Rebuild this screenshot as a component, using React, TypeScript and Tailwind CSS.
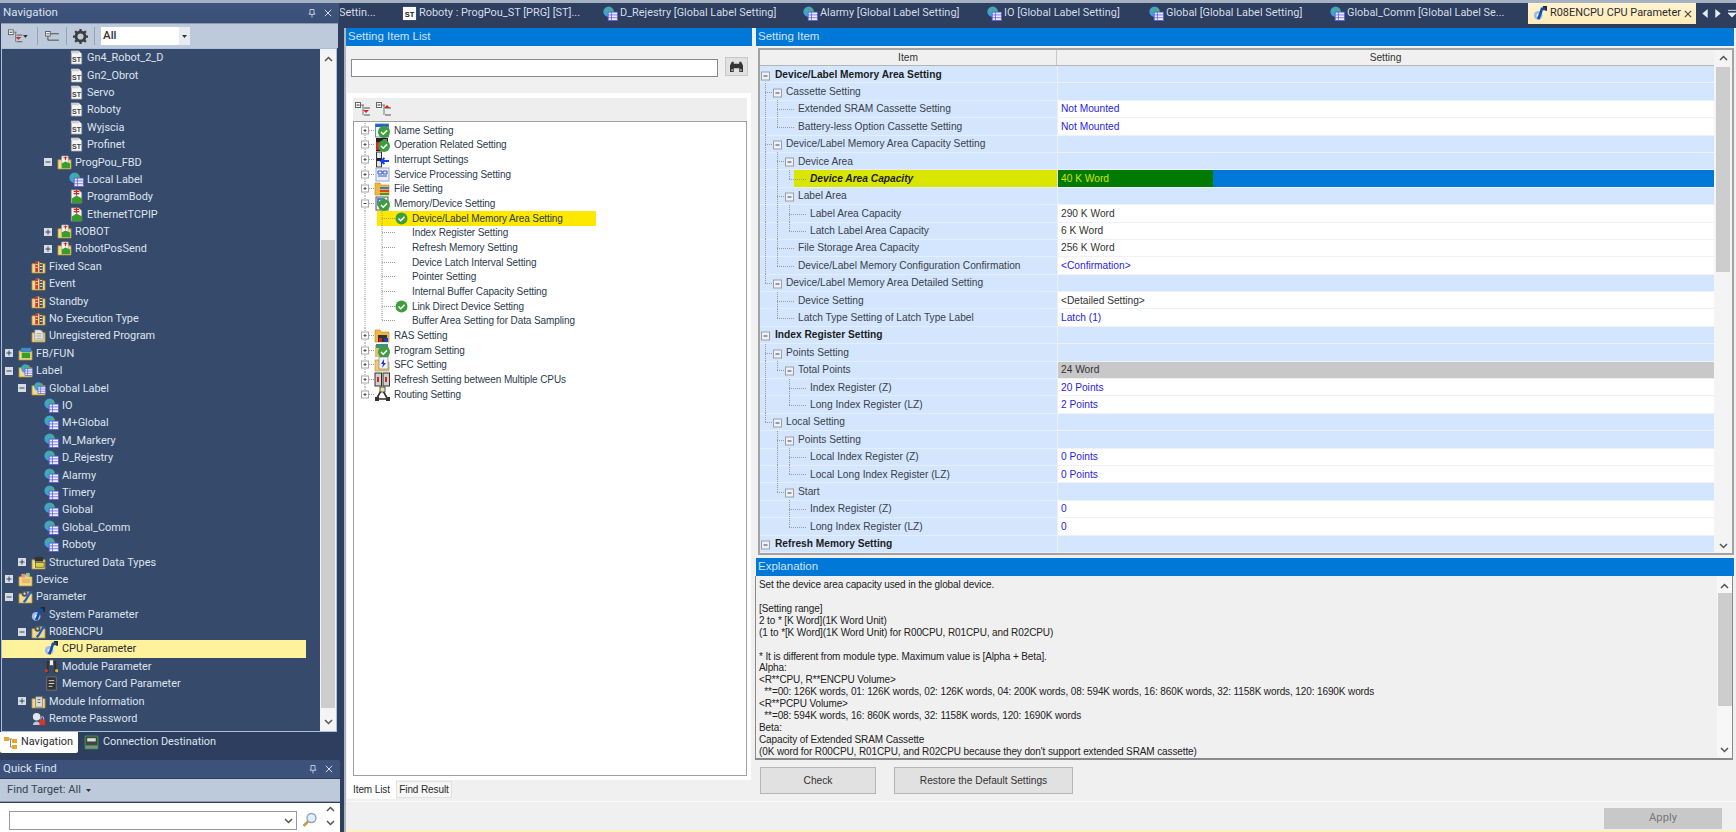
import React from "react";

const SEG = "font-['Roboto',sans-serif]";
const ARL = "font-['Liberation_Sans',sans-serif]";

type IconName = "st" | "globe" | "globeFolder" | "fbd" | "fbdFolder" | "scan" | "unreg" | "fb" | "struct" | "device" | "paramFolder" | "param" | "module" | "card" | "info" | "pass";

function Folder() {
  return <path d="M1 5h4l1-2h6v2h3v10H1z" fill="#f3d98a" stroke="#a5873a" strokeWidth="0.8" />;
}
function GlobeTable() {
  return (
    <>
      <circle cx="6" cy="6" r="5.6" fill="#3f9ee6" />
      <path d="M3 2.5c2 0 3 1 2.5 2.5S3 6 2.5 8M7 1c1 1.5 3 1 3.5 3S8 5.5 8 7" fill="#4cb85a" />
      <rect x="5.5" y="6.5" width="10" height="9" fill="#eeeeff" stroke="#5a5ad8" strokeWidth="0.9" />
      <path d="M5.5 9.5h10M5.5 12.5h10M9 6.5v9" stroke="#5a5ad8" strokeWidth="0.8" />
    </>
  );
}
function GearWrench() {
  return (
    <>
      <circle cx="5.5" cy="10" r="4.6" fill="#9dbcf0" />
      <circle cx="5.5" cy="10" r="1.7" fill="#eef3fd" />
      <path d="M14 3L9.5 3 8 8 5.5 14" stroke="#164fa8" strokeWidth="2.8" fill="none" />
      <path d="M10.5 1h3.5v4" stroke="#22262e" strokeWidth="1.8" fill="none" />
    </>
  );
}
function NavIcon({ n }: { n: IconName }) {
  return (
    <svg viewBox="0 0 16 16" className="w-[15px] h-[15px] shrink-0">
      {n === "st" && (
        <>
          <path d="M2.5 1h8l3 3v11h-11z" fill="#f5f5f5" stroke="#a8a8a8" strokeWidth="0.8" />
          <rect x="2.5" y="1" width="8" height="2.5" fill="#cfcfcf" />
          <text x="8" y="13" textAnchor="middle" fontSize="7.5" fontWeight="700" fill="#444" fontFamily="Liberation Sans, sans-serif">ST</text>
        </>
      )}
      {n === "globe" && <GlobeTable />}
      {n === "globeFolder" && (
        <>
          <Folder />
          <g transform="translate(3 1) scale(0.8)"><GlobeTable /></g>
        </>
      )}
      {n === "fbd" && (
        <>
          <path d="M2.5 1h8l3 3v11h-11z" fill="#f2f2f2" stroke="#a0a0a0" strokeWidth="0.7" />
          <path d="M5 2.5h6M8 1v6M5 5h6" stroke="#d8261c" strokeWidth="1.3" />
          <path d="M3 10l5-3 6 3v5H3z" fill="#3a9d2b" />
        </>
      )}
      {n === "fbdFolder" && (
        <>
          <Folder />
          <path d="M5 1h7v10H5z" fill="#f4f4f4" stroke="#999" strokeWidth="0.6" />
          <path d="M7 3h4M9 1.5v4" stroke="#d8261c" strokeWidth="1.1" />
          <path d="M5 9l4-2 5 2v5H5z" fill="#3a9d2b" />
        </>
      )}
      {n === "scan" && (
        <>
          <Folder />
          <rect x="4.5" y="3" width="3" height="11" fill="#d8352a" />
          <rect x="9" y="1" width="3.5" height="13" fill="#4a4a4a" />
          <path d="M5 6h2M5 9h2M9.5 5h2.5M9.5 8h2.5M9.5 11h2.5" stroke="#eee" strokeWidth="1" />
        </>
      )}
      {n === "unreg" && (
        <>
          <Folder />
          <path d="M4 2h6l3 3v8H4z" fill="#e6e6e6" stroke="#8a8a8a" strokeWidth="0.7" />
          <path d="M6 6h5M6 8.5h5M6 11h5" stroke="#999" strokeWidth="0.9" />
        </>
      )}
      {n === "fb" && (
        <>
          <Folder />
          <rect x="3" y="2" width="11" height="4" fill="#3e8ed0" stroke="#2a5f9a" strokeWidth="0.6" />
          <rect x="4" y="7" width="9" height="6" fill="#3a9d2b" />
        </>
      )}
      {n === "struct" && (
        <>
          <Folder />
          <rect x="4" y="2" width="9" height="5" fill="#333" />
          <rect x="5" y="8" width="9" height="5" fill="#d9d23a" stroke="#333" strokeWidth="0.6" />
        </>
      )}
      {n === "device" && (
        <>
          <Folder />
          <rect x="3.5" y="2" width="4" height="4" fill="#e88e8e" />
          <rect x="8.5" y="1" width="4" height="4" fill="#9ac48a" />
          <rect x="4" y="7" width="9" height="5" fill="#e9b66a" />
        </>
      )}
      {n === "paramFolder" && (
        <>
          <Folder />
          <circle cx="7" cy="5" r="3.2" fill="#555" />
          <path d="M14 2L8 12 6 14" stroke="#1f5fc4" strokeWidth="2.4" fill="none" />
          <circle cx="7" cy="5" r="1.2" fill="#ddd" />
        </>
      )}
      {n === "param" && <GearWrench />}
      {n === "module" && (
        <>
          <path d="M4 15V3h8v12" stroke="#3a2d20" strokeWidth="2" fill="none" />
          <rect x="6" y="1" width="4" height="6" fill="#eee" stroke="#444" strokeWidth="0.7" />
          <rect x="1" y="11" width="3" height="3" fill="#d8352a" />
          <rect x="12" y="11" width="3" height="3" fill="#e3b53a" />
        </>
      )}
      {n === "card" && (
        <>
          <rect x="3" y="1" width="10" height="14" fill="#333" stroke="#888" strokeWidth="0.7" />
          <path d="M5 5h6M5 8h6M5 11h4" stroke="#ddd" strokeWidth="1" />
        </>
      )}
      {n === "info" && (
        <>
          <Folder />
          <rect x="5" y="3" width="7" height="11" fill="#ddd" stroke="#666" strokeWidth="0.7" />
          <path d="M7 6h3M7 9h3" stroke="#555" strokeWidth="1" />
        </>
      )}
      {n === "pass" && (
        <>
          <circle cx="6" cy="6" r="4" fill="#dfe6ee" />
          <path d="M2 15c0-5 8-5 8 0z" fill="#bfc8d2" />
          <rect x="9" y="9" width="6" height="6" fill="#d8352a" />
          <path d="M10.5 9V7.5a1.5 1.5 0 013 0V9" stroke="#ccc" fill="none" />
        </>
      )}
    </svg>
  );
}

type NavRow = { t: string; l: 0 | 1 | 2 | 3 | 4; e?: "+" | "-"; i: IconName; sel?: boolean };
const navRows: NavRow[] = [
  { t: "Gn4_Robot_2_D", l: 4, i: "st" },
  { t: "Gn2_Obrot", l: 4, i: "st" },
  { t: "Servo", l: 4, i: "st" },
  { t: "Roboty", l: 4, i: "st" },
  { t: "Wyjscia", l: 4, i: "st" },
  { t: "Profinet", l: 4, i: "st" },
  { t: "ProgPou_FBD", l: 3, e: "-", i: "fbdFolder" },
  { t: "Local Label", l: 4, i: "globe" },
  { t: "ProgramBody", l: 4, i: "fbd" },
  { t: "EthernetTCPIP", l: 4, i: "fbd" },
  { t: "ROBOT", l: 3, e: "+", i: "fbdFolder" },
  { t: "RobotPosSend", l: 3, e: "+", i: "fbdFolder" },
  { t: "Fixed Scan", l: 1, i: "scan" },
  { t: "Event", l: 1, i: "scan" },
  { t: "Standby", l: 1, i: "scan" },
  { t: "No Execution Type", l: 1, i: "scan" },
  { t: "Unregistered Program", l: 1, i: "unreg" },
  { t: "FB/FUN", l: 0, e: "+", i: "fb" },
  { t: "Label", l: 0, e: "-", i: "globeFolder" },
  { t: "Global Label", l: 1, e: "-", i: "globeFolder" },
  { t: "IO", l: 2, i: "globe" },
  { t: "M+Global", l: 2, i: "globe" },
  { t: "M_Markery", l: 2, i: "globe" },
  { t: "D_Rejestry", l: 2, i: "globe" },
  { t: "Alarmy", l: 2, i: "globe" },
  { t: "Timery", l: 2, i: "globe" },
  { t: "Global", l: 2, i: "globe" },
  { t: "Global_Comm", l: 2, i: "globe" },
  { t: "Roboty", l: 2, i: "globe" },
  { t: "Structured Data Types", l: 1, e: "+", i: "struct" },
  { t: "Device", l: 0, e: "+", i: "device" },
  { t: "Parameter", l: 0, e: "-", i: "paramFolder" },
  { t: "System Parameter", l: 1, i: "param" },
  { t: "R08ENCPU", l: 1, e: "-", i: "paramFolder" },
  { t: "CPU Parameter", l: 2, i: "param", sel: true },
  { t: "Module Parameter", l: 2, i: "module" },
  { t: "Memory Card Parameter", l: 2, i: "card" },
  { t: "Module Information", l: 1, e: "+", i: "info" },
  { t: "Remote Password", l: 1, i: "pass" },
];

const indent: Record<number, string> = {
  0: "w-[3px]",
  1: "w-[16px]",
  2: "w-[29px]",
  3: "w-[42px]",
  4: "w-[54px]",
};

function NavExp({ e }: { e?: "+" | "-" }) {
  return (
    <div className="w-[8px] h-[8px] shrink-0 flex items-center justify-center">
      {e && (
        <svg viewBox="0 0 8 8" className="w-[8px] h-[8px]">
          <rect width="8" height="8" fill="#d7dce3" />
          <path d={e === "+" ? "M1.5 4h5M4 1.5v5" : "M1.5 4h5"} stroke="#33475f" strokeWidth="1" />
        </svg>
      )}
    </div>
  );
}

function Chevron({ up, className = "" }: { up?: boolean; className?: string }) {
  return (
    <svg viewBox="0 0 9 6" className={"w-[9px] h-[6px] " + className}>
      <path d={up ? "M1 5l3.5-3.5L8 5" : "M1 1l3.5 3.5L8 1"} stroke="#555" strokeWidth="1.5" fill="none" />
    </svg>
  );
}

function TreeGlyph({ up }: { up?: boolean }) {
  return (
    <svg viewBox="0 0 16 15" className="w-[16px] h-[15px]">
      <rect x="0.5" y="0.5" width="5" height="5" fill="#fff" stroke="#666" />
      <path d="M1.5 3h3" stroke="#333" />
      <path d="M6 3h3M8 3v10" stroke="#777" />
      <path d="M9 6h6M9 13h6" stroke="#555" />
      <path d={up ? "M8 6l3-3 3 3z" : "M8 8h6l-3 3z"} fill="#d8261c" />
    </svg>
  );
}

function LeftColumn() {
  return (
    <div className={"w-[340px] shrink-0 flex flex-col h-[829px] " + SEG}>
      <div className="h-[20px] flex items-center justify-between pl-[3px] pr-[7px] bg-[linear-gradient(#40557d,#3a4f76)] mr-[1px] text-[#dbe3ef] text-[11.5px]">
        <span>Navigation</span>
        <div className="flex items-center gap-[8px]">
          <svg viewBox="0 0 10 12" className="w-[8px] h-[11px]"><path d="M2.5 1h5v5h1v1h-7V6h1zM5 7v4" stroke="#dbe3ef" fill="none" /></svg>
          <svg viewBox="0 0 10 10" className="w-[8px] h-[8px]"><path d="M1 1l8 8M9 1L1 9" stroke="#dbe3ef" strokeWidth="1.2" /></svg>
        </div>
      </div>
      <div className="h-[25px] ml-[1px] mr-[2px] bg-[#bccadc] flex items-center pl-[7px] gap-[6px] border-t border-[#8d9aac]">
        <div className="w-[20px] flex items-center"><TreeGlyph /><svg viewBox="0 0 5 3" className="w-[5px] h-[3px]"><path d="M0 0h5L2.5 3z" fill="#333" /></svg></div>
        <div className="w-[1px] h-[18px] bg-[#94a3b8] ml-[3px]" />
        <svg viewBox="0 0 16 12" className="w-[15px] h-[11px] ml-[1px]"><rect x="0.5" y="0.5" width="5" height="5" fill="#fff" stroke="#555" /><path d="M1.5 3h3M6 3h9M3 6v4h12" stroke="#444" fill="none" /></svg>
        <div className="w-[1px] h-[18px] bg-[#94a3b8]" />
        <svg viewBox="0 0 16 16" className="w-[15px] h-[15px]">
          <circle cx="8" cy="8" r="4.8" fill="none" stroke="#3d3d3d" strokeWidth="3" />
          <path d="M8 0v3M8 13v3M0 8h3M13 8h3M2.3 2.3l2.2 2.2M11.5 11.5l2.2 2.2M13.7 2.3l-2.2 2.2M4.5 11.5l-2.2 2.2" stroke="#3d3d3d" strokeWidth="2.4" />
        </svg>
        <div className="w-[1px] h-[18px] bg-[#94a3b8]" />
        <div className="w-[89px] h-[18px] bg-white flex items-center justify-between">
          <span className="pl-[2px] text-[11.5px] font-medium text-[#333]">All</span>
          <div className="w-[11px] h-[18px] bg-[#e8ebf0] flex items-center justify-center">
            <svg viewBox="0 0 5 3" className="w-[5px] h-[3px]"><path d="M0 0h5L2.5 3z" fill="#333" /></svg>
          </div>
        </div>
      </div>
      <div className="h-[684px] ml-[1px] mr-[3px] flex border border-[#a9bfdc] bg-[#364a6b]">
        <div className="flex-1 min-w-0 flex flex-col">
          {navRows.map((r, i) => (
            <div key={i} className={"h-[17.4px] flex items-center shrink-0 " + (r.sel ? "bg-[#fff29d] w-[304px] text-[#2b2b2b]" : "text-[#dde4ef]")}>
              <div className={indent[r.l] + " shrink-0"} />
              <NavExp e={r.e} />
              <div className="w-[5px] shrink-0" />
              <NavIcon n={r.i} />
              <span className="ml-[3px] text-[10.9px] leading-[17px] whitespace-nowrap">{r.t}</span>
            </div>
          ))}
        </div>
        <div className="w-[16px] bg-[#f4f4f4] flex flex-col items-center pt-[7px] pb-[6px]">
          <Chevron up />
          <div className="h-[178px]" />
          <div className="w-[14px] h-[468px] bg-[#cdcdcd]" />
          <div className="flex-1" />
          <Chevron />
        </div>
      </div>
      <div className="h-[21px] flex items-stretch text-[10.9px]">
        <div className="w-[78px] bg-white flex items-center pl-[4px] gap-[3px] text-[#2b2b2b] rounded-b-[2px]">
          <svg viewBox="0 0 14 14" className="w-[14px] h-[14px] shrink-0"><rect x="0" y="1" width="5" height="4" fill="#e8a62a" /><rect x="8" y="3" width="5" height="4" fill="#e8a62a" /><rect x="8" y="9" width="5" height="4" fill="#e8a62a" /><path d="M5 3h3M6.5 3v8H8" stroke="#888" fill="none" /></svg>
          <span>Navigation</span>
        </div>
        <div className="flex items-center pl-[6px] gap-[4px] text-[#dde4ef]">
          <svg viewBox="0 0 14 14" className="w-[15px] h-[15px] shrink-0"><rect x="1" y="1" width="12" height="9" rx="1" fill="#444" stroke="#2f9e44" /><rect x="3" y="3" width="8" height="3" fill="#ddd" /><rect x="1" y="10" width="12" height="3" fill="#888" stroke="#2f9e44" strokeWidth="0.6" /></svg>
          <span>Connection Destination</span>
        </div>
      </div>
      <div className="h-[7px]" />
      <div className="h-[18px] flex items-center justify-between pl-[3px] pr-[7px] bg-[#3d527a] text-[#dbe3ef] text-[11.5px] rounded-t-[2px]">
        <span>Quick Find</span>
        <div className="flex items-center gap-[8px]">
          <svg viewBox="0 0 10 12" className="w-[8px] h-[11px]"><path d="M2.5 1h5v5h1v1h-7V6h1zM5 7v4" stroke="#dbe3ef" fill="none" /></svg>
          <svg viewBox="0 0 10 10" className="w-[8px] h-[8px]"><path d="M1 1l8 8M9 1L1 9" stroke="#dbe3ef" strokeWidth="1.2" /></svg>
        </div>
      </div>
      <div className="h-[23px] mt-[1px] bg-[#bccadc] flex items-center pl-[7px] gap-[5px] text-[11.2px] text-[#3a4452] border-b border-[#8d9aac]">
        <span>Find Target: All</span>
        <svg viewBox="0 0 5 3" className="w-[5px] h-[3px]"><path d="M0 0h5L2.5 3z" fill="#333" /></svg>
      </div>
      <div className="h-[29px] mt-[1px] bg-white flex items-start pl-[9px] pt-[8px]">
        <div className="w-[288px] h-[19px] border border-[#999] flex items-center justify-end pr-[3px]"><Chevron /></div>
        <svg viewBox="0 0 16 16" className="w-[16px] h-[16px] ml-[5px] mt-[1px]"><circle cx="9.5" cy="6" r="4.5" fill="#e4eefa" stroke="#8ba6c6" strokeWidth="1.4" /><path d="M6 9.5L1.5 14" stroke="#c59a55" strokeWidth="2.6" /></svg>
        <div className="flex flex-col items-center gap-[8px] ml-[8px] -mt-[5px]"><Chevron up /><Chevron /></div>
      </div>
    </div>
  );
}

type Tab = { t: string; w: string; i?: "st" | "globe"; cut?: boolean };
const tabs: Tab[] = [
  { t: "Settin...", w: "w-[62px]", cut: true },
  { t: "Roboty : ProgPou_ST [PRG] [ST]...", w: "w-[201px]", i: "st" },
  { t: "D_Rejestry [Global Label Setting]", w: "w-[200px]", i: "globe" },
  { t: "Alarmy [Global Label Setting]", w: "w-[184px]", i: "globe" },
  { t: "IO [Global Label Setting]", w: "w-[162px]", i: "globe" },
  { t: "Global [Global Label Setting]", w: "w-[181px]", i: "globe" },
  { t: "Global_Comm [Global Label Se...", w: "w-[198px]", i: "globe" },
];

function TabBar() {
  return (
    <div className={"h-[21px] flex items-stretch overflow-hidden text-[10.9px] " + SEG}>
      {tabs.map((tb) => (
        <div key={tb.t} className={tb.w + " shrink-0 flex items-center gap-[2px] text-[#d5dde9] whitespace-nowrap overflow-hidden"}>
          {tb.i === "st" && (
            <svg viewBox="0 0 16 16" className="w-[15px] h-[15px] shrink-0"><rect x="1" y="1" width="14" height="14" fill="#fafafa" /><text x="8" y="12" textAnchor="middle" fontSize="8" fontWeight="700" fill="#222" fontFamily="Liberation Sans, sans-serif">ST</text></svg>
          )}
          {tb.i === "globe" && <NavIcon n="globe" />}
          <span className={tb.cut ? "-ml-[1px]" : ""}>{tb.t}</span>
        </div>
      ))}
      <div className="w-[168px] shrink-0 flex items-center pl-[5px] bg-[linear-gradient(#fff3d0,#ffecb8)] text-[#2b2b2b] whitespace-nowrap">
        <NavIcon n="param" />
        <span className="ml-[2px]">R08ENCPU CPU Parameter</span>
        <svg viewBox="0 0 10 10" className="w-[8px] h-[8px] ml-auto mr-[4px] shrink-0"><path d="M1 1l8 8M9 1L1 9" stroke="#444" strokeWidth="1.4" /></svg>
      </div>
      <div className="flex items-center pl-[6px] gap-[7px]">
        <svg viewBox="0 0 6 10" className="w-[6px] h-[9px]"><path d="M6 0v10L0 5z" fill="#e6ecf5" /></svg>
        <svg viewBox="0 0 6 10" className="w-[6px] h-[9px]"><path d="M0 0v10l6-5z" fill="#e6ecf5" /></svg>
        <svg viewBox="0 0 9 9" className="w-[8px] h-[9px]"><path d="M0 1h9M0 4h9l-4.5 4.5z" stroke="#e6ecf5" fill="#e6ecf5" /></svg>
      </div>
    </div>
  );
}

type SIcon = "name" | "op" | "int" | "svc" | "file" | "mem" | "ras" | "prog" | "sfc" | "ref" | "route";
function SettingIcon({ n, check }: { n: SIcon; check?: boolean }) {
  return (
    <svg viewBox="0 0 15 15" className="w-[15px] h-[15px] shrink-0 overflow-visible">
      {n === "name" && (<><rect x="0.5" y="1" width="13" height="13" fill="#eef3fb" stroke="#7a8ba8" /><rect x="0.5" y="1" width="13" height="3" fill="#2466c7" /></>)}
      {n === "op" && (<><rect x="1" y="1" width="12" height="13" fill="#222" /><rect x="1" y="5" width="6" height="8" fill="#d8261c" /><path d="M8 3h4" stroke="#ddd" /></>)}
      {n === "int" && (<><rect x="1.5" y="0" width="5" height="15" fill="#e6e6e6" stroke="#333" /><rect x="2" y="6" width="4" height="3" fill="#222" /><path d="M14 9H7M9.5 6L6 9l3.5 3" stroke="#1040f0" strokeWidth="2" fill="none" /></>)}
      {n === "svc" && (<><rect x="1" y="1" width="13" height="13" fill="#e9eefa" stroke="#9aa8c8" /><path d="M3 4h4v3H3zM8 4h4v3H8zM3 9h9" stroke="#3a55c8" fill="none" /></>)}
      {n === "file" && (<><path d="M0 2h5l1 2h8v10H0z" fill="#f0b640" stroke="#c08a20" strokeWidth="0.6" /><rect x="5" y="6" width="9" height="2" fill="#2e7fd6" /><rect x="5" y="9" width="9" height="2" fill="#d8461c" /><rect x="5" y="12" width="9" height="2" fill="#3a9d2b" /></>)}
      {n === "mem" && (<><rect x="1" y="1" width="12" height="13" fill="#f2f2f2" stroke="#555" /><rect x="3" y="3" width="6" height="6" fill="none" stroke="#1f5fc4" strokeWidth="1.5" /></>)}
      {n === "ras" && (<><path d="M0 2h5l1 2h8v10H0z" fill="#f0b640" stroke="#c08a20" strokeWidth="0.6" /><rect x="3" y="7" width="9" height="7" fill="#333" /><rect x="4" y="10" width="3" height="4" fill="#d8261c" /><rect x="9" y="10" width="4" height="4" fill="#1f3fb0" /></>)}
      {n === "prog" && (<><path d="M0 2h5l1 2h8v10H0z" fill="#e0c070" /><rect x="1" y="1" width="12" height="4" fill="#3a8f8a" /></>)}
      {n === "sfc" && (<><path d="M0 3h4l1 2h9v9H0z" fill="#f0cb70" stroke="#b08a30" strokeWidth="0.6" /><rect x="4" y="0" width="9" height="12" fill="#f0f2ff" stroke="#777" strokeWidth="0.6" /><path d="M9 2L6 7h2l-1 4 4-5H9z" fill="#1f3fd0" /></>)}
      {n === "ref" && (<><rect x="0" y="1" width="6.5" height="13" fill="#cfcfcf" stroke="#333" /><rect x="8" y="1" width="6.5" height="13" fill="#cfcfcf" stroke="#333" /><rect x="2" y="5" width="2" height="5" fill="#d8261c" /><rect x="10" y="5" width="2" height="5" fill="#d8261c" /></>)}
      {n === "route" && (<><path d="M7 2L2 11M7 2l5 9M3 12h9" stroke="#3a2d20" strokeWidth="1.6" fill="none" /><rect x="5" y="0" width="5" height="5" fill="#f0e0a0" stroke="#333" strokeWidth="0.8" /><rect x="0" y="10" width="4" height="4" fill="#333" /><rect x="11" y="10" width="4" height="4" fill="#333" /></>)}
      {check && <CheckMark cx={9} cy={9} />}
    </svg>
  );
}
function CheckMark({ cx, cy }: { cx: number; cy: number }) {
  return (
    <>
      <circle cx={cx} cy={cy} r="6" fill="#3d9e3d" />
      <path d={`M${cx - 3} ${cy}l2.2 2.2 3.8-3.8`} stroke="#fff" strokeWidth="1.5" fill="none" />
    </>
  );
}

type SRow = { t: string; i?: SIcon; c?: boolean; open?: boolean; sel?: boolean; last?: boolean };
const sroots1: SRow[] = [
  { t: "Name Setting", i: "name", c: true },
  { t: "Operation Related Setting", i: "op", c: true },
  { t: "Interrupt Settings", i: "int" },
  { t: "Service Processing Setting", i: "svc" },
  { t: "File Setting", i: "file" },
  { t: "Memory/Device Setting", i: "mem", c: true, open: true },
];
const schildren: SRow[] = [
  { t: "Device/Label Memory Area Setting", c: true, sel: true },
  { t: "Index Register Setting" },
  { t: "Refresh Memory Setting" },
  { t: "Device Latch Interval Setting" },
  { t: "Pointer Setting" },
  { t: "Internal Buffer Capacity Setting" },
  { t: "Link Direct Device Setting", c: true },
  { t: "Buffer Area Setting for Data Sampling", last: true },
];
const sroots2: SRow[] = [
  { t: "RAS Setting", i: "ras" },
  { t: "Program Setting", i: "prog", c: true },
  { t: "SFC Setting", i: "sfc" },
  { t: "Refresh Setting between Multiple CPUs", i: "ref" },
  { t: "Routing Setting", i: "route", last: true },
];

const dot = { stroke: "#9a9a9a", strokeDasharray: "1 1" };

function SRootRow({ r }: { r: SRow }) {
  return (
    <div className="h-[14.67px] flex items-center">
      <svg width="21" height="15" className="shrink-0">
        <path d={r.last ? "M11 0v7.5" : "M11 0v15"} {...dot} />
        <path d="M11 7.5h10" {...dot} />
        <rect x="7.5" y="4" width="7" height="7" fill="#fff" stroke="#a8a8a8" />
        <path d={r.open ? "M9.5 7.5h3" : "M9.5 7.5h3M11 6v3"} stroke="#555" />
      </svg>
      <SettingIcon n={r.i!} check={r.c} />
      <span className="ml-[4px] whitespace-nowrap">{r.t}</span>
    </div>
  );
}

function SChildRow({ r }: { r: SRow }) {
  return (
    <div className="h-[14.67px] flex items-center">
      <svg width="23" height="15" className="shrink-0"><path d="M11 0v15" {...dot} /></svg>
      <div className={"w-[219px] h-full flex items-center " + (r.sel ? "bg-[#ffe800]" : "")}>
        <svg width="18" height="15" className="shrink-0">
          <path d={r.last ? "M5 0v7.5" : "M5 0v15"} {...dot} />
          <path d="M5 7.5h13" {...dot} />
        </svg>
        <div className="w-[17px] shrink-0 flex">
          {r.c && <svg viewBox="0 0 13 13" className="w-[13px] h-[13px]"><CheckMark cx={6.5} cy={6.5} /></svg>}
        </div>
        <span className="whitespace-nowrap">{r.t}</span>
      </div>
    </div>
  );
}

function CenterColumn() {
  return (
    <div className={"w-[410px] shrink-0 flex flex-col text-[10px] tracking-[-0.1px] " + ARL}>
      <div className="h-[18px] bg-[#0078d7] text-[#cfe3f7] flex items-center pl-[2px] mr-[4px] text-[11.5px] tracking-normal">Setting Item List</div>
      <div className="flex items-start pl-[5px] pt-[11px] h-[47px]">
        <div className="w-[367px] h-[18px] bg-white border border-[#8a8a8a] mt-[2px]" />
        <div className="w-[23px] h-[19px] ml-[7px] bg-[#e1e1e1] border border-[#c8c8c8] flex items-center justify-center">
          <svg viewBox="0 0 16 14" className="w-[15px] h-[13px]"><path d="M1 13V6l2-4h2v11zM15 13V6l-2-4h-2v11zM5 4h6v5H5z" fill="#333" /><circle cx="3.2" cy="11" r="1.2" fill="#999" /><circle cx="12.8" cy="11" r="1.2" fill="#999" /></svg>
        </div>
      </div>
      <div className="h-[687px] w-[404px] ml-[1px] bg-white pl-[6px] pr-[4px] pt-[5px] flex flex-col">
        <div className="h-[23px] bg-[#eeeeee] flex items-center pl-[2px] gap-[5px]"><TreeGlyph /><TreeGlyph up /></div>
        <div className="h-[655px] border border-[#a0a0a0] pt-[1px] text-[#2d3b4d]">
          {sroots1.map((r) => <SRootRow key={r.t} r={r} />)}
          {schildren.map((r) => <SChildRow key={r.t} r={r} />)}
          {sroots2.map((r) => <SRootRow key={r.t} r={r} />)}
        </div>
      </div>
      <div className="h-[21px] flex items-start pl-[1px] text-[#2b2b2b] whitespace-nowrap">
        <div className="w-[49px] h-[19px] bg-white flex items-center justify-center">Item List</div>
        <div className="w-[56px] h-[17px] mt-[1px] bg-[#f6f6f6] border border-[#e2e2e2] flex items-center justify-center">Find Result</div>
      </div>
    </div>
  );
}

type TRow = { t: string; l: 0 | 1 | 2 | 3; e?: boolean; v?: string; k?: "blue" | "dark" | "gray" | "hi" };
const trows: TRow[] = [
  { t: "Device/Label Memory Area Setting", l: 0, e: true },
  { t: "Cassette Setting", l: 1, e: true },
  { t: "Extended SRAM Cassette Setting", l: 2, v: "Not Mounted", k: "blue" },
  { t: "Battery-less Option Cassette Setting", l: 2, v: "Not Mounted", k: "blue" },
  { t: "Device/Label Memory Area Capacity Setting", l: 1, e: true },
  { t: "Device Area", l: 2, e: true },
  { t: "Device Area Capacity", l: 3, v: "40 K Word", k: "hi" },
  { t: "Label Area", l: 2, e: true },
  { t: "Label Area Capacity", l: 3, v: "290 K Word", k: "dark" },
  { t: "Latch Label Area Capacity", l: 3, v: "6 K Word", k: "dark" },
  { t: "File Storage Area Capacity", l: 2, v: "256 K Word", k: "dark" },
  { t: "Device/Label Memory Configuration Confirmation", l: 2, v: "<Confirmation>", k: "blue" },
  { t: "Device/Label Memory Area Detailed Setting", l: 1, e: true },
  { t: "Device Setting", l: 2, v: "<Detailed Setting>", k: "dark" },
  { t: "Latch Type Setting of Latch Type Label", l: 2, v: "Latch (1)", k: "blue" },
  { t: "Index Register Setting", l: 0, e: true },
  { t: "Points Setting", l: 1, e: true },
  { t: "Total Points", l: 2, e: true, v: "24 Word", k: "gray" },
  { t: "Index Register (Z)", l: 3, v: "20 Points", k: "blue" },
  { t: "Long Index Register (LZ)", l: 3, v: "2 Points", k: "blue" },
  { t: "Local Setting", l: 1, e: true },
  { t: "Points Setting", l: 2, e: true },
  { t: "Local Index Register (Z)", l: 3, v: "0 Points", k: "blue" },
  { t: "Local Long Index Register (LZ)", l: 3, v: "0 Points", k: "blue" },
  { t: "Start", l: 2, e: true },
  { t: "Index Register (Z)", l: 3, v: "0", k: "blue" },
  { t: "Long Index Register (LZ)", l: 3, v: "0", k: "blue" },
  { t: "Refresh Memory Setting", l: 0, e: true },
];

const xs = [5, 17, 29, 41];
const svgW: Record<number, string> = { 0: "w-[15px]", 1: "w-[26px]", 2: "w-[38px]", 3: "w-[50px]" };
const sw = [15, 26, 38, 50];

function continues(i: number, a: number) {
  for (let j = i + 1; j < trows.length; j++) {
    if (trows[j].l <= a) return false;
    if (trows[j].l === a + 1) return true;
  }
  return false;
}

function TreeLines({ i, r }: { i: number; r: TRow }) {
  const parts: string[] = [];
  for (let a = 0; a < r.l; a++) {
    const cont = continues(i, a);
    if (a === r.l - 1) {
      parts.push(`M${xs[a] + 0.5} 0V${cont ? 17.4 : 9}`);
      parts.push(`M${xs[a]} 9.5H${r.e ? xs[r.l] : sw[r.l] - 4}`);
    } else if (cont) {
      parts.push(`M${xs[a] + 0.5} 0V17.4`);
    }
  }
  const cx = xs[r.l];
  return (
    <svg height="17.4" className={svgW[r.l] + " shrink-0"}>
      <path d={parts.join("")} {...dot} fill="none" />
      {r.e && (
        <>
          <rect x={cx - 3.5} y="6" width="8" height="8" fill="#eef2f8" stroke="#9a9fa8" />
          <path d={`M${cx - 1.5} 10h4`} stroke="#444" />
        </>
      )}
    </svg>
  );
}

function TableRowView({ r, i }: { r: TRow; i: number }) {
  const hi = r.k === "hi";
  const valCls =
    r.k === "blue" ? "bg-white text-[#2a1ce6]" :
    r.k === "dark" ? "bg-white text-[#333]" :
    r.k === "gray" ? "bg-[#c8c8c8] text-[#333]" :
    hi ? "bg-[#0078d7]" : "bg-[#d4e6fd]";
  return (
    <div className="h-[17.4px] flex shrink-0">
      <div className={"w-[297px] shrink-0 flex items-center border-b border-[#e4eefc] " + (hi ? "bg-[linear-gradient(to_right,#d4e6fd_34px,#d9e600_34px)]" : "bg-[#d4e6fd]")}>
        <TreeLines i={i} r={r} />
        <span className={"whitespace-nowrap " + (r.l === 0 ? "font-bold text-[#1c1c1c]" : hi ? "font-bold italic text-[#1c1c1c]" : "text-[#3a3f4a]")}>{r.t}</span>
      </div>
      <div className={"w-[657px] ml-[1px] flex items-center border-b border-[#eef2f8] " + valCls + (hi ? "" : " pl-[3px]")}>
        {hi ? <div className="w-[155px] h-full bg-[#007a00] text-[#d0e400] flex items-center pl-[3px]">{r.v}</div> : r.v}
      </div>
    </div>
  );
}

const expl = [
  "Set the device area capacity used in the global device.",
  "",
  "[Setting range]",
  "2 to * [K Word](1K Word Unit)",
  "(1 to *[K Word](1K Word Unit) for R00CPU, R01CPU, and R02CPU)",
  "",
  "* It is different from module type. Maximum value is [Alpha + Beta].",
  "Alpha:",
  "<R**CPU, R**ENCPU Volume>",
  "  **=00: 126K words, 01: 126K words, 02: 126K words, 04: 200K words, 08: 594K words, 16: 860K words, 32: 1158K words, 120: 1690K words",
  "<R**PCPU Volume>",
  "  **=08: 594K words, 16: 860K words, 32: 1158K words, 120: 1690K words",
  "Beta:",
  "Capacity of Extended SRAM Cassette",
  "(0K word for R00CPU, R01CPU, and R02CPU because they don't support extended SRAM cassette)",
];

function RightColumn() {
  return (
    <div className={"flex-1 min-w-0 flex flex-col pr-[2px] text-[10.2px] " + ARL}>
      <div className="h-[18px] bg-[#0078d7] text-[#cfe3f7] flex items-center pl-[2px] text-[11.5px]">Setting Item</div>
      <div className="h-[507px] mt-[2px] ml-[2px] border-2 border-[#a3a3a3] flex">
        <div className="w-[954px] shrink-0 flex flex-col">
          <div className="h-[16px] flex bg-[#f0f0f0] text-[#333] shrink-0 border-b border-[#b5b5b5]">
            <div className="w-[297px] flex items-center justify-center border-r border-[#c8c8c8]">Item</div>
            <div className="flex-1 flex items-center justify-center">Setting</div>
          </div>
          {trows.map((r, i) => <TableRowView key={i} r={r} i={i} />)}
        </div>
        <div className="flex-1 bg-[#f4f4f4] flex flex-col items-center pt-[5px] pb-[4px]">
          <Chevron up />
          <div className="w-[14px] h-[205px] mt-[6px] bg-[#cdcdcd]" />
          <div className="flex-1" />
          <Chevron />
        </div>
      </div>
      <div className="h-[18px] mt-[3px] bg-[#0078d7] text-[#cfe3f7] flex items-center pl-[2px] text-[11.5px]">Explanation</div>
      <div className="h-[184px] mr-[1px] -ml-[1px] border-l border-r border-b-2 border-[#8a8a8a] bg-[#f0f0f0] flex">
        <div className="flex-1 min-w-0 pl-[3px] pt-[3px] text-[10px] text-[#222] leading-[11.93px] tracking-[-0.11px] whitespace-pre">
          {expl.map((l, i) => <div key={i} className="h-[11.93px]">{l}</div>)}
        </div>
        <div className="w-[15px] bg-[#f7f7f7] flex flex-col items-center pt-[7px] pb-[5px]">
          <Chevron up />
          <div className="w-[14px] h-[113px] mt-[4px] bg-[#cdcdcd]" />
          <div className="flex-1" />
          <Chevron />
        </div>
      </div>
      <div className="h-[41px] flex items-start pt-[7px] pl-[4px] gap-[18px] text-[#333]">
        <button className="w-[116px] h-[27px] bg-[#e1e1e1] border border-[#b5b5b5] flex items-center justify-center">Check</button>
        <button className="w-[179px] h-[27px] bg-[#e1e1e1] border border-[#b5b5b5] flex items-center justify-center">Restore the Default Settings</button>
      </div>
    </div>
  );
}

export default function App() {
  return (
    <div className="w-[1736px] h-[832px] overflow-hidden bg-[#2d3e5e] flex flex-col">
      <div className="h-[3px] bg-[#a7b1c4] shrink-0" />
      <div className="flex h-[829px]">
        <LeftColumn />
        <div className="flex-1 min-w-0 flex flex-col">
          <TabBar />
          <div className="h-[4px] shrink-0" />
          <div className="flex-1 min-h-0 ml-[4px] bg-[#f0f0f0] border-l-2 border-[#aeb4bd] flex flex-col">
            <div className="flex h-[773px] shrink-0">
              <CenterColumn />
              <RightColumn />
            </div>
            <div className="h-[29px] shrink-0 border-t border-[#f8f8f8] flex justify-end items-start pt-[6px] pr-[14px]">
              <div className={"w-[118px] h-[21px] bg-[#c8c8c8] text-[#777] text-[11.2px] flex items-center justify-center " + SEG}>Apply</div>
            </div>
            <div className="h-[2px] shrink-0 bg-[#fff0c0]" />
          </div>
        </div>
      </div>
    </div>
  );
}
